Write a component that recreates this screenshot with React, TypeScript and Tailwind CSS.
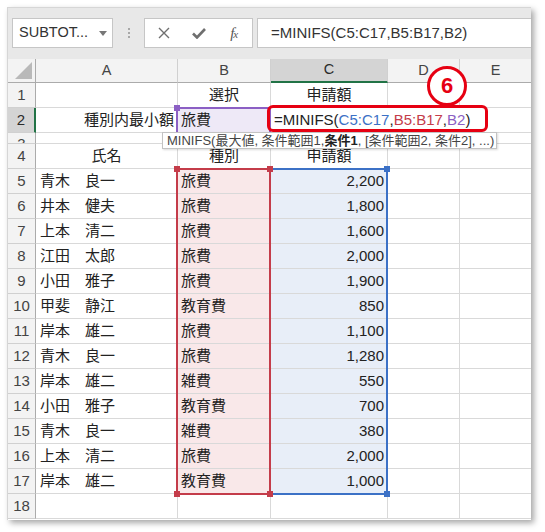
import React from "react";

const people = [
  { name: "青木　良一", kind: "旅費", amount: "2,200" },
  { name: "井本　健夫", kind: "旅費", amount: "1,800" },
  { name: "上本　清二", kind: "旅費", amount: "1,600" },
  { name: "江田　太郎", kind: "旅費", amount: "2,000" },
  { name: "小田　雅子", kind: "旅費", amount: "1,900" },
  { name: "甲斐　静江", kind: "教育費", amount: "850" },
  { name: "岸本　雄二", kind: "旅費", amount: "1,100" },
  { name: "青木　良一", kind: "旅費", amount: "1,280" },
  { name: "岸本　雄二", kind: "雑費", amount: "550" },
  { name: "小田　雅子", kind: "教育費", amount: "700" },
  { name: "青木　良一", kind: "雑費", amount: "380" },
  { name: "上本　清二", kind: "旅費", amount: "2,000" },
  { name: "岸本　雄二", kind: "教育費", amount: "1,000" },
];

const cell = "border-r border-b border-[#d9d9d9] flex items-center text-[15px] text-[#222] whitespace-nowrap overflow-hidden";
const rowHead = "border-r border-b border-r-[#ababab] border-b-[#d0d0d0] bg-[#f3f3f3] flex items-center justify-center text-[15px] text-[#444]";
const colHead = "border-r border-b border-r-[#d0d0d0] border-b-[#ababab] bg-[#f3f3f3] flex items-center justify-center text-[14.5px] text-[#444]";

function Handle({ x, y, color }: { x: number; y: number; color: string }) {
  return <div className="absolute w-[6px] h-[6px]" style={{ left: x - 3, top: y - 3, backgroundColor: color }} />;
}

export default function App() {
  const red = "#c43c4a";
  const blue = "#3c71c6";
  const purple = "#8b5fc4";

  return (
    <div className="relative w-[545px] h-[532px] bg-white pt-[7px] pl-[7px] font-['Liberation_Sans','Noto_Sans_CJK_JP',sans-serif]">
      <div className="w-[524px] h-[513px] overflow-hidden bg-white shadow-[3px_3px_6px_rgba(0,0,0,0.35)] border-t border-l border-[#d6d6d6]">
        {/* formula toolbar */}
        <div className="h-[51px] bg-[#e8e8e8] flex items-start pt-[10px] pl-[4px]">
          <div className="w-[101px] h-[30px] bg-white border border-[#c6c6c6] flex items-center pl-[6px] pr-[5px] text-[14.5px] text-[#333]">
            <span className="flex-1">SUBTOT...</span>
            <svg width="8" height="5" viewBox="0 0 8 5"><path d="M0 0h8L4 5z" fill="#777" /></svg>
          </div>
          <div className="w-[31px] h-[30px] flex flex-col items-center justify-center gap-[2px]">
            <span className="w-[2px] h-[2px] bg-[#a8a8a8]" />
            <span className="w-[2px] h-[2px] bg-[#a8a8a8]" />
            <span className="w-[2px] h-[2px] bg-[#a8a8a8]" />
          </div>
          <div className="w-[109px] h-[30px] bg-white border border-[#c6c6c6] flex items-center">
            <div className="w-[38px] flex justify-center">
              <svg width="12" height="12" viewBox="0 0 12 12"><path d="M1 1l10 10M11 1L1 11" stroke="#6f6f6f" strokeWidth="1.4" /></svg>
            </div>
            <div className="w-[34px] flex justify-center">
              <svg width="14" height="12" viewBox="0 0 14 12"><path d="M1 6.5l4 4L13 2" stroke="#6f6f6f" strokeWidth="2.6" fill="none" /></svg>
            </div>
            <div className="w-[36px] flex justify-center font-['Liberation_Serif',serif] italic text-[15px] text-[#555] leading-none">
              f<span className="text-[11px] -ml-[1px] mt-[3px]">x</span>
            </div>
          </div>
          <div className="flex-1 ml-[4px] h-[30px] bg-white border border-[#c6c6c6] border-r-0 flex items-center pl-[13px] text-[15px] text-[#333]">
            =MINIFS(C5:C17,B5:B17,B2)
          </div>
        </div>

        {/* sheet grid */}
        <div className="grid grid-cols-[28px_142px_93px_117px_72px_72px] grid-rows-[24px_25px_25px_11px_repeat(15,25px)]">
          <div className="border-r border-b border-r-[#ababab] border-b-[#ababab] bg-[#f3f3f3] flex items-end justify-end pr-[3px] pb-[3px]">
            <svg width="17" height="17" viewBox="0 0 17 17"><path d="M17 0V17H0z" fill="#b9b9b9" /></svg>
          </div>
          <div className={colHead}>A</div>
          <div className={colHead}>B</div>
          <div className="border-r border-r-[#d0d0d0] border-b-2 border-b-[#217346] bg-[#d4d4d4] flex items-center justify-center text-[14.5px] text-[#2b2b2b]">C</div>
          <div className={colHead}>D</div>
          <div className={colHead}>E</div>

          {/* row 1 */}
          <div className={rowHead}>1</div>
          <div className={cell} />
          <div className={`${cell} justify-center`}>選択</div>
          <div className={`${cell} justify-center`}>申請額</div>
          <div className={cell} />
          <div className={cell} />

          {/* row 2 */}
          <div className="border-b border-b-[#d0d0d0] border-r-2 border-r-[#217346] bg-[#d4d4d4] flex items-center justify-center text-[15px] text-[#2b2b2b]">2</div>
          <div className={`${cell} justify-end pr-[3px]`}>種別内最小額</div>
          <div className={`${cell} bg-[#eee9f7] pl-[3px]`}>旅費</div>
          <div className="border-b border-[#d9d9d9] bg-white flex items-center pl-[3px] text-[15px] text-[#222] whitespace-nowrap overflow-visible">
            =MINIFS(<span style={{ color: blue }}>C5:C17</span>,<span style={{ color: red }}>B5:B17</span>,<span style={{ color: purple }}>B2</span>
            <span className="inline-block w-px h-[16px] bg-black" />)
          </div>
          <div className="border-b border-[#d9d9d9]" />
          <div className={cell} />

          {/* row 3: too short, its number is cut */}
          <div className="border-r border-b border-r-[#ababab] border-b-[#d0d0d0] bg-[#f3f3f3] flex justify-center items-start overflow-hidden">
            <span className="text-[15px] text-[#444] leading-[15px] mt-[3px]">3</span>
          </div>
          <div className={cell} />
          <div className={cell} />
          <div className={cell} />
          <div className={cell} />
          <div className={cell} />

          {/* row 4 */}
          <div className={rowHead}>4</div>
          <div className={`${cell} justify-center`}>氏名</div>
          <div className={`${cell} justify-center`}>種別</div>
          <div className={`${cell} justify-center`}>申請額</div>
          <div className={cell} />
          <div className={cell} />

          {people.map((p, i) => (
            <React.Fragment key={i}>
              <div className={rowHead}>{i + 5}</div>
              <div className={`${cell} pl-[4px]`}>{p.name}</div>
              <div className={`${cell} bg-[#f9e8e9] pl-[3px]`}>{p.kind}</div>
              <div className={`${cell} bg-[#e8eef8] justify-end pr-[3px] text-[14px]`}>{p.amount}</div>
              <div className={cell} />
              <div className={cell} />
            </React.Fragment>
          ))}

          {/* row 18 */}
          <div className={rowHead}>18</div>
          <div className={cell} />
          <div className={cell} />
          <div className={cell} />
          <div className={cell} />
          <div className={cell} />
        </div>
      </div>

      {/* range highlights */}
      <div className="absolute left-[176px] top-[107px] w-[95px] h-[27px] border-2 border-[#8b5fc4]" />
      <Handle x={177} y={108} color={purple} />
      <div className="absolute left-[269px] top-[168px] w-[119px] h-[327px] border-2 border-[#3c71c6]" />
      <Handle x={387} y={169} color={blue} />
      <Handle x={387} y={494} color={blue} />
      <div className="absolute left-[176px] top-[168px] w-[95px] h-[327px] border-2 border-[#c43c4a]" />
      <Handle x={177} y={169} color={red} />
      <Handle x={270} y={169} color={red} />
      <Handle x={177} y={494} color={red} />
      <Handle x={270} y={494} color={red} />

      {/* function tooltip */}
      <div className="absolute left-[162px] top-[132px] w-[335px] h-[17px] bg-white border border-[#c3c3c3] shadow-[1px_1px_2px_rgba(0,0,0,0.15)] flex items-center pl-[4px] text-[13px] text-[#444] whitespace-nowrap">
        MINIFS(最大値, 条件範囲1, <b className="text-[#222]">条件1</b>, [条件範囲2, 条件2], ...)
      </div>

      {/* annotations */}
      <div className="absolute left-[267px] top-[105px] w-[221px] h-[27px] border-[3px] border-[#e60012] rounded-[6px]" />
      <div className="absolute left-[427px] top-[66px] w-[40px] h-[40px] rounded-full border-[3px] border-[#e60012] bg-white flex items-center justify-center text-[22px] font-bold text-[#e60012] leading-none">
        6
      </div>
    </div>
  );
}
